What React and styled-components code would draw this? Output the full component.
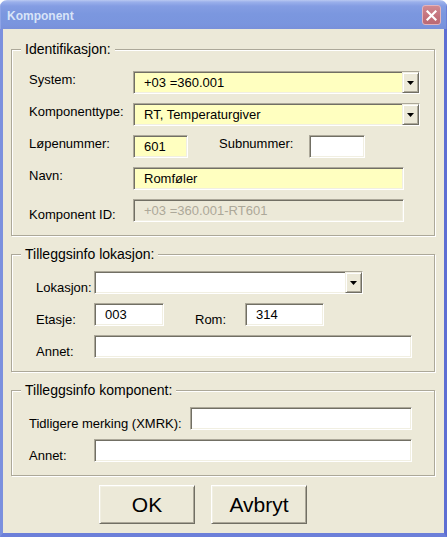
import React from 'react';
import styled, { createGlobalStyle } from 'styled-components';

const Global = createGlobalStyle`
  *, *::before, *::after { box-sizing: border-box; }
  html, body { margin: 0; padding: 0; background: #ffffff; }
  body { font-family: "Liberation Sans", Arial, sans-serif; }
`;

const Window = styled.div`
  width: 447px;
  height: 537px;
  display: flex;
  flex-direction: column;
  border-radius: 7px 7px 0 0;
  overflow: hidden;
`;

const TitleBar = styled.div`
  height: 29px;
  flex: none;
  display: flex;
  align-items: center;
  justify-content: space-between;
  padding: 1px 6px 0 7px;
  background: linear-gradient(
    to bottom,
    #b9c9f1 0px,
    #9ab0eb 2px,
    #849de3 6px,
    #7b97df 14px,
    #7a95de 24px,
    #7990da 29px
  );
  box-shadow: inset 1px 0 0 #8ea4e6, inset -1px 0 0 #6c80d6;
`;

const Title = styled.span`
  font-family: "Liberation Sans", Arial, sans-serif;
  font-weight: bold;
  font-size: 12px;
  line-height: 14px;
  color: #d8e4f8;
  margin-top: 2px;
`;

const CloseButton = styled.div`
  width: 19px;
  height: 20px;
  border-radius: 3px;
  border: 1px solid #e3b3ba;
  background: linear-gradient(to bottom, #d08a92, #c3717b 60%, #bb6a75);
  display: flex;
  align-items: center;
  justify-content: center;
`;

const Frame = styled.div`
  flex: 1;
  display: flex;
  flex-direction: column;
  background: #ece9d8;
  border-left: 3px solid #7b90de;
  border-right: 3px solid #5d6ed3;
  border-bottom: 4px solid #6c7fd9;
  padding: 11px 9px 9px 8px;
`;

const Group = styled.fieldset`
  margin: ${(p) => p.$mt}px 0 0 0;
  padding: 0;
  min-width: 0;
  border: 1px solid #aca899;
  box-shadow: inset 1px 1px 0 #ffffff, 1px 1px 0 #ffffff;
`;

const Legend = styled.legend`
  margin-left: 9px;
  padding: 0 4px;
  font-size: 14px;
  line-height: 18px;
  color: #000;
  background: #ece9d8;
`;

const GroupBody = styled.div`
  display: flex;
  flex-direction: column;
  gap: 9px;
  padding: ${(p) => p.$pt}px 0 13px ${(p) => p.$pl}px;
`;

const Row = styled.div`
  display: flex;
  align-items: flex-start;
  height: 23px;
`;

const Label = styled.span`
  flex: none;
  width: ${(p) => p.$w}px;
  margin-left: ${(p) => p.$ml || 0}px;
  margin-top: ${(p) => p.$dy}px;
  font-size: 13px;
  line-height: 15px;
  color: #000;
  white-space: nowrap;
`;

const sunken = `
  border: 1px solid;
  border-color: #aca899 #ffffff #ffffff #aca899;
  box-shadow: inset 1px 1px 0 #716f64, inset -1px -1px 0 #f1efe2;
`;

const Field = styled.div`
  flex: none;
  width: ${(p) => p.$w}px;
  height: 23px;
  ${sunken}
  background: ${(p) => (p.$disabled ? '#ece9d8' : p.$yellow ? '#ffffc0' : '#ffffff')};
  color: ${(p) => (p.$disabled ? '#aca899' : '#000000')};
  padding-left: 10px;
  font-size: 13px;
  line-height: 21px;
  white-space: nowrap;
  overflow: hidden;
`;

const Combo = styled.div`
  flex: none;
  width: ${(p) => p.$w}px;
  height: 23px;
  ${sunken}
  background: ${(p) => (p.$yellow ? '#ffffc0' : '#ffffff')};
  display: flex;
  align-items: stretch;
`;

const ComboText = styled.span`
  flex: 1;
  padding-left: 10px;
  font-size: 13px;
  line-height: 21px;
  color: #000;
  white-space: nowrap;
  overflow: hidden;
`;

const DropButton = styled.div`
  flex: none;
  width: 17px;
  border: 1px solid;
  border-color: #f1efe2 #716f64 #716f64 #f1efe2;
  box-shadow: inset 1px 1px 0 #ffffff, inset -1px -1px 0 #aca899;
  background: #ece9d8;
  display: flex;
  align-items: center;
  justify-content: center;
`;

const ButtonRow = styled.div`
  display: flex;
  gap: 16px;
  margin-top: 9px;
  padding-left: 88px;
`;

const DialogButton = styled.div`
  width: 96px;
  height: 39px;
  display: flex;
  align-items: center;
  justify-content: center;
  background: #ece9d8;
  border: 1px solid;
  border-color: #ffffff #716f64 #716f64 #ffffff;
  box-shadow: inset 1px 1px 0 #f1efe2, inset -1px -1px 0 #aca899;
  font-size: 21px;
  color: #000;
`;

const Arrow = () => (
  <svg width="7" height="4" viewBox="0 0 7 4">
    <polygon points="0,0 7,0 3.5,4" fill="#000" />
  </svg>
);

const ComboBox = ({ w, yellow, children }) => (
  <Combo $w={w} $yellow={yellow}>
    <ComboText>{children}</ComboText>
    <DropButton>
      <Arrow />
    </DropButton>
  </Combo>
);

export default function App() {
  return (
    <>
      <Global />
      <Window>
        <TitleBar>
          <Title>Komponent</Title>
          <CloseButton>
            <svg width="11" height="11" viewBox="0 0 11 11">
              <path d="M1.5 1.5 L9.5 9.5 M9.5 1.5 L1.5 9.5" stroke="#ffffff" strokeWidth="2.2" strokeLinecap="square" />
            </svg>
          </CloseButton>
        </TitleBar>
        <Frame>
          <Group $mt={0}>
            <Legend>Identifikasjon:</Legend>
            <GroupBody $pt={13} $pl={17}>
              <Row>
                <Label $w={104} $dy={1}>System:</Label>
                <ComboBox w={287} yellow>+03 =360.001</ComboBox>
              </Row>
              <Row>
                <Label $w={104} $dy={1}>Komponenttype:</Label>
                <ComboBox w={287} yellow>RT, Temperaturgiver</ComboBox>
              </Row>
              <Row>
                <Label $w={104} $dy={1}>Løpenummer:</Label>
                <Field $w={55} $yellow>601</Field>
                <Label $w={90} $ml={31} $dy={1}>Subnummer:</Label>
                <Field $w={56} />
              </Row>
              <Row>
                <Label $w={104} $dy={1}>Navn:</Label>
                <Field $w={271} $yellow>Romføler</Field>
              </Row>
              <Row>
                <Label $w={104} $dy={8}>Komponent ID:</Label>
                <Field $w={271} $disabled>+03 =360.001-RT601</Field>
              </Row>
            </GroupBody>
          </Group>

          <Group $mt={9}>
            <Legend>Tilleggsinfo lokasjon:</Legend>
            <GroupBody $pt={8} $pl={24}>
              <Row>
                <Label $w={58} $dy={9}>Lokasjon:</Label>
                <ComboBox w={269} />
              </Row>
              <Row>
                <Label $w={58} $dy={9}>Etasje:</Label>
                <Field $w={70}>003</Field>
                <Label $w={50} $ml={31} $dy={9}>Rom:</Label>
                <Field $w={79}>314</Field>
              </Row>
              <Row>
                <Label $w={58} $dy={9}>Annet:</Label>
                <Field $w={318} />
              </Row>
            </GroupBody>
          </Group>

          <Group $mt={9}>
            <Legend>Tilleggsinfo komponent:</Legend>
            <GroupBody $pt={8} $pl={17}>
              <Row>
                <Label $w={161} $dy={9}>Tidligere merking (XMRK):</Label>
                <Field $w={222} />
              </Row>
              <Row>
                <Label $w={65} $dy={9}>Annet:</Label>
                <Field $w={318} />
              </Row>
            </GroupBody>
          </Group>

          <ButtonRow>
            <DialogButton>OK</DialogButton>
            <DialogButton>Avbryt</DialogButton>
          </ButtonRow>
        </Frame>
      </Window>
    </>
  );
}
